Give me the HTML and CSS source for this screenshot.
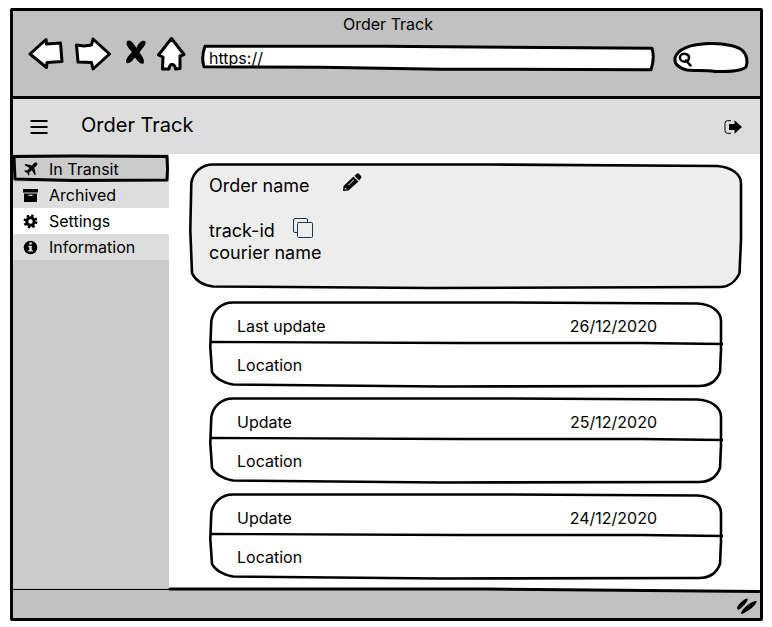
FILE: index.html
```html
<!DOCTYPE html>
<html lang="en">
<head>
<meta charset="utf-8">
<meta name="viewport" content="width=device-width, initial-scale=1">
<title>Order Track</title>
<link rel="stylesheet" href="styles.css">
</head>
<body>
<svg class="defs" aria-hidden="true">
  <defs>
    <g id="update-outline">
      <path class="fill-white" stroke-width="2.6" d="M23 1.500 L300 1.500 L487 2.500 C502 3 511 11 511 20 L511 48 L510 71 C507 79 500 85 489 85 L230 85.500 L23 83.500 C13 82 5 77 2 71 L.3 46 L1.300 20 C3 9 12 1.500 23 1.500 Z"/>
      <path stroke-width="2.300" d="M1 41 L250 42 L430 42 L512 43"/>
    </g>
  </defs>
</svg>
<div class="window">
  <header class="chrome">
    <p class="chrome-title">Order Track</p>
    <div class="toolbar">
      <div class="nav">
        <button type="button" aria-label="Back"><svg width="36" height="36" viewBox="28 36 36 36"><path d="M30 53 L46 38.500 L46.500 43 L60.500 42 L62 60.500 L47 61.500 L46.500 66.500 Z"/></svg></button>
        <button type="button" aria-label="Forward"><svg width="36" height="36" viewBox="75 36 36 36"><path d="M76.500 44 L84 45 L91.500 44 L93 38 L109.500 53 L93 68 L91.500 61.500 L78 61 Z"/></svg></button>
        <button type="button" aria-label="Stop"><svg width="22" height="36" viewBox="125 36 22 36"><path class="solid" d="M127 40 C130 38 133 41 136.500 47 C139 41 143 38.500 145.500 40.500 C146.500 44 142 47 139.500 51.500 C143 56 145 60 143.500 62.500 C140 64 137 59 135 56.500 C132 61 128 63.500 126 61.500 C125.500 58 129 54 132 51 C128 47 125.500 43 127 40 Z"/></svg></button>
        <button type="button" aria-label="Home"><svg width="30" height="36" viewBox="157 36 30 36"><path d="M171.500 37.500 L184 53.500 L180 55 L180 67.500 L175.500 68 Q175 63.500 172 63.500 Q169.500 63.500 169 68 L162.500 68 L163 56 L158.500 54 Z"/></svg></button>
      </div>
      <div class="field address">
        <svg class="sketch" viewBox="0 0 454 30" preserveAspectRatio="none" aria-hidden="true"><path class="fill-white" d="M4 2.500 L180 2.500 L451 4.500 Q454 15 450 27.500 L240 27 L120 25 L3 24.500 Q0 14 4 2.500 Z"/></svg>
        <input type="text" value="https://" aria-label="Address">
      </div>
      <div class="field search">
        <svg class="sketch" viewBox="0 0 75 31" preserveAspectRatio="none" aria-hidden="true"><path class="fill-white" d="M2 16 C4 7 18 2 36 1.500 C53 1 66 5 70 9 C74 13 75 20 73 25 C68 30 52 29.500 42 29.500 C32 28 22 29 14 28 C6 26 1 22 2 16 Z"/></svg>
        <svg class="lens" width="14" height="15" viewBox="0 0 14 15" aria-hidden="true"><path stroke-width="2.500" d="M3 3 C5 .8 11 1.500 11 5.500 C11 9.500 7 10.500 4 9 C1.300 7.500 1.300 5 3 3 M8 8.500 L12.500 13.500"/></svg>
        <input type="search" aria-label="Search">
      </div>
    </div>
  </header>

  <div class="appbar">
    <button type="button" aria-label="Menu"><svg width="18" height="16" viewBox="0 0 18 16"><path d="M.5 2 H17.500 M.5 8 H17.500 M.5 14 H17.500"/></svg></button>
    <h1>Order Track</h1>
    <button type="button" aria-label="Sign out"><svg width="18" height="16" viewBox="0 0 18 16"><path class="thin" d="M7 1.700 H3.500 Q1 1.700 1 4.200 V11.800 Q1 14.300 3.500 14.300 H7"/><path class="solid" d="M5 5 H10.500 V1.300 L18 8 L10.500 14.700 V11 H5 Z"/></svg></button>
  </div>

  <div class="content">
    <nav class="sidebar" aria-label="Orders">
      <a class="item current" href="#transit" aria-current="page">
        <svg class="sketch" viewBox="0 0 156 28" preserveAspectRatio="none" aria-hidden="true"><path d="M1 2.500 L60 2 L154 2.500 L154.500 15 L154 26 L60 26.500 L2 25 Z"/></svg>
        <svg class="icon" width="16" height="16" viewBox="0 0 16 16" aria-hidden="true"><path class="solid" d="M14 2 C13 1 11.500 1.700 10.500 2.800 L9 4.500 L2.500 3 L1.500 4 L6.500 7 L4.200 9.600 L2 9.300 L1.200 10.200 L4 11.700 L5.600 14.500 L6.500 13.700 L6.200 11.500 L8.800 9.200 L11.800 14.300 L12.800 13.300 L11.300 6.700 L13 5.200 C14.300 4.100 15 3 14 2 Z"/></svg>
        <span>In Transit</span></a>
      <a class="item" href="#archived">
        <svg class="icon" width="16" height="16" viewBox="0 0 16 16" aria-hidden="true"><path class="solid" fill-rule="evenodd" d="M0 2 H15 V5.500 H0 Z M1 6.500 H14 V15 H1 Z M5.500 7.700 V9 H9.500 V7.700 Z"/></svg>
        <span>Archived</span></a>
      <a class="item selected" href="#settings">
        <svg class="icon" width="16" height="16" viewBox="0 0 16 16" aria-hidden="true"><circle class="teeth" cx="7.500" cy="8.500" r="5.500"/><circle class="ring" cx="7.500" cy="8.500" r="3.700"/></svg>
        <span>Settings</span></a>
      <a class="item" href="#information">
        <svg class="icon" width="16" height="16" viewBox="0 0 16 16" aria-hidden="true"><circle class="solid" cx="7.500" cy="8.500" r="6.800"/><path class="light" d="M6.300 3.500 H8.800 V5.500 H6.300 Z M5.300 6.800 H8.800 V11 H9.800 V12.500 H5.300 V11 H6.300 V8.300 H5.300 Z"/></svg>
        <span>Information</span></a>
    </nav>

    <main>
      <section class="order">
        <svg class="sketch" viewBox="0 0 552 127" preserveAspectRatio="none" aria-hidden="true"><path class="fill-card" stroke-width="2.600" d="M23 1.500 L300 1.500 L527 3 C541 4 551 11 551 20 L551 77 L549.500 110 C546 118 539 124 530 124 L240 125 L23 123.500 C12 122 5 117 2 110 L.3 67 L1.300 20 C3 9 12 1.500 23 1.500 Z"/></svg>
        <div class="line name">
          <h2>Order name</h2>
          <button type="button" aria-label="Edit order name"><svg width="20" height="22" viewBox="0 0 20 22"><path class="solid" fill-rule="evenodd" d="M1 19 L1.500 14 L11.500 4.500 L16.500 9.500 L6.500 18.500 Z M3 15.500 L2.700 17.500 L5 17.200 Z M6 13 L6.600 13.600 L12.200 8 L11.600 7.400 Z M12.500 3.700 L15 1.500 Q16 .8 16.700 1.500 L19.200 4.200 Q19.800 5 19.200 5.700 L17.300 8.500 Z"/></svg></button>
        </div>
        <div class="line track">
          <span>track-id</span>
          <button type="button" aria-label="Copy track-id"><svg width="22" height="22" viewBox="0 0 22 22"><path class="copy" d="M5.500 15.500 H3 Q1.500 15.500 1.500 14 V3 Q1.500 1.500 3 1.500 H14 Q15.500 1.500 15.500 3 V5.500"/><rect class="copy" x="5.500" y="5.500" width="15" height="15" rx="1"/></svg></button>
        </div>
        <div class="line"><span>courier name</span></div>
      </section>

      <div class="updates">
        <article class="update">
          <svg class="sketch" viewBox="0 0 512 86" preserveAspectRatio="none" aria-hidden="true"><use href="#update-outline"/></svg>
          <div class="row"><span>Last update</span><time datetime="2020-12-26">26/12/2020</time></div>
          <div class="row">Location</div>
        </article>
        <article class="update">
          <svg class="sketch" viewBox="0 0 512 86" preserveAspectRatio="none" aria-hidden="true"><use href="#update-outline"/></svg>
          <div class="row"><span>Update</span><time datetime="2020-12-25">25/12/2020</time></div>
          <div class="row">Location</div>
        </article>
        <article class="update">
          <svg class="sketch" viewBox="0 0 512 86" preserveAspectRatio="none" aria-hidden="true"><use href="#update-outline"/></svg>
          <div class="row"><span>Update</span><time datetime="2020-12-24">24/12/2020</time></div>
          <div class="row">Location</div>
        </article>
      </div>
    </main>
  </div>

  <footer class="status">
    <svg class="sketch" viewBox="0 0 747 30" preserveAspectRatio="none" aria-hidden="true"><path class="fill-white none" d="M156 0 H747 V3 L470 1 Z"/><path class="hair" d="M0 1.500 H156"/><path d="M157 1 L470 1 L746 3.500"/></svg>
    <svg class="grip" width="22" height="20" viewBox="0 0 22 20" aria-hidden="true"><path class="solid" d="M1 12 C1.500 9 8 2.500 11.500 2.500 C13 5 5.500 12.500 2 14 Z M5 17.500 C6 12.500 15 5 20.500 5 C21.500 8.500 11 16.500 5.500 18 Z"/></svg>
  </footer>
</div>
</body>
</html>
```
FILE: styles.css
```css
* {
  box-sizing: border-box;
}

body {
  margin: 0;
  min-height: 100vh;
  padding: 8px 9px 6px 10px;
  display: flex;
  background: #fff;
  color: #000;
  font-family: Inter, Lato, sans-serif;
  font-size: 16px;
  line-height: 24px;
}

h1,
h2,
p {
  margin: 0;
  font-weight: 400;
}

button {
  display: block;
  padding: 0;
  border: 0;
  background: none;
  color: inherit;
  cursor: pointer;
}

svg {
  display: block;
  flex: none;
  fill: none;
  stroke: #000;
  stroke-width: 3;
  stroke-linejoin: round;
  stroke-linecap: round;
}

.defs {
  position: absolute;
  width: 0;
  height: 0;
}

.solid {
  fill: #000;
  stroke: none;
}

.light {
  fill: #ddd;
  stroke: none;
}

.fill-white {
  fill: #fff;
}

.fill-card {
  fill: #ededed;
}

.none {
  stroke: none;
}

.thin,
.copy {
  stroke-width: 1;
}

.copy {
  stroke: #16384a;
}

.hair {
  stroke-width: 1;
}

.sketch {
  position: absolute;
  inset: 0;
  width: 100%;
  height: 100%;
  overflow: visible;
}

.sketch path {
  vector-effect: non-scaling-stroke;
}

.window {
  flex: 1;
  min-width: 0;
  display: flex;
  flex-direction: column;
  border: 3px solid #000;
  border-radius: 2px;
}

.chrome {
  padding: 1px 12px 23px 15px;
  border-bottom: 3px solid #000;
  background: #c1c1c1;
}

.chrome-title {
  text-align: center;
}

.toolbar {
  display: flex;
  align-items: center;
}

.nav {
  display: flex;
  margin-right: 14px;
}

.nav button {
  margin-right: 11px;
}

.nav button:nth-child(2) {
  margin-right: 14px;
}

.nav button:nth-child(3) {
  margin-right: 10px;
}

.nav button:last-child {
  margin-right: 0;
}

.nav path:not(.solid) {
  fill: #fff;
}

.field {
  position: relative;
  display: flex;
  align-items: center;
}

.field input {
  position: relative;
  flex: 1;
  min-width: 0;
  height: 28px;
  padding: 0 8px;
  border: 0;
  background: none;
  font: inherit;
  color: inherit;
  appearance: none;
}

.address {
  flex: 1;
  margin-top: 6px;
}

.search {
  width: 75px;
  height: 31px;
  margin: 6px 0 0 18px;
}

.lens {
  position: relative;
  margin: 4px 0 0 5px;
}

.appbar {
  display: flex;
  align-items: center;
  height: 55px;
  padding: 0 18px 0 17px;
  background: #ddd;
}

.appbar path {
  stroke-width: 2;
  stroke-linecap: butt;
}

.appbar path.thin {
  stroke-width: 1;
}

.appbar h1 {
  flex: 1;
  padding: 0 0 4px 33px;
  font-size: 20px;
}

.content {
  flex: 1;
  display: flex;
}

.sidebar {
  width: 156px;
  padding-top: 2px;
  background: #cbcbcb;
}

.item {
  position: relative;
  display: flex;
  align-items: center;
  gap: 10px;
  height: 26px;
  padding: 0 0 1px 10px;
  background: #ddd;
  color: inherit;
  text-decoration: none;
}

.item.current {
  background: #cbcbcb;
}

.item.selected {
  background: #fff;
}

.item .sketch {
  top: -2px;
  height: 28px;
}

.item .ring {
  stroke-width: 3;
}

.item .teeth {
  stroke-width: 3;
  stroke-linecap: butt;
  stroke-dasharray: 2.3 2.02;
}

main {
  flex: 1;
  min-width: 0;
  padding: 9px 18px 9px 21px;
}

.order {
  position: relative;
  min-height: 127px;
  padding: 12px 19px 24px;
  font-size: 18px;
  line-height: 22px;
}

.order h2 {
  font-size: 18px;
}

.line {
  position: relative;
  display: flex;
  height: 22px;
}

.line.name {
  gap: 32px;
  margin-bottom: 23px;
}

.line.track {
  gap: 17px;
}

.line button {
  align-self: center;
}

.line button svg {
  margin-top: -6px;
}

.updates {
  display: flex;
  flex-direction: column;
  gap: 10px;
  margin: 11px 20px 0;
}

.update {
  position: relative;
  height: 86px;
  padding: 5px 65px 0 27px;
}

.update .row {
  position: relative;
  display: flex;
  justify-content: space-between;
  align-items: center;
  height: 39px;
}

.status {
  position: relative;
  display: flex;
  justify-content: flex-end;
  align-items: center;
  height: 30px;
  padding-right: 2px;
  background: #c1c1c1;
}

.grip {
  position: relative;
  margin-top: 6px;
}
```
